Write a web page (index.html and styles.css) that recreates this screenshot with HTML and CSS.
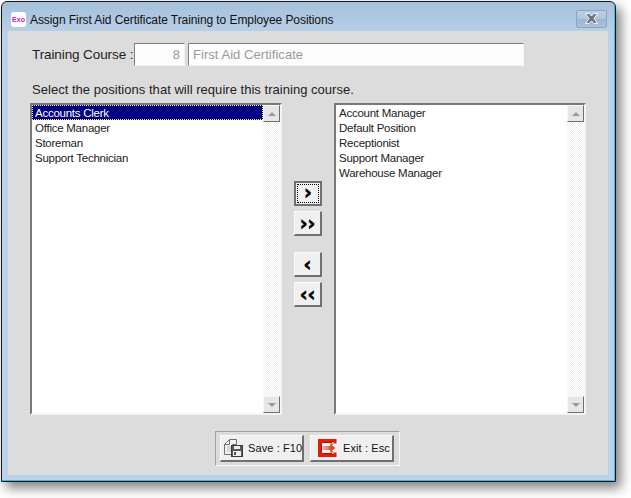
FILE: index.html
```html
<!DOCTYPE html>
<html lang="en">
<head>
    <meta charset="UTF-8">
    <meta name="viewport" content="width=device-width, initial-scale=1.0">
    <title>Assign First Aid Certificate Training to Employee Positions</title>
    <link rel="stylesheet" href="styles.css">
</head>
<body>
    <div class="window">
        <div class="titlebar">
            <span class="app-icon">Exo</span>
            <span class="title">Assign First Aid Certificate Training to Employee Positions</span>
            <button class="close-btn" aria-label="Close">
                <svg width="15" height="11" viewBox="0 0 15 11">
                    <path d="M1.500 .5h3.500l2.500 2.500L10 .5h3.500L10 5.500l3.500 5h-3.500L7.500 8 5 10.500H1.500L5 5.500z" fill="#6c7680" stroke="#f4f6f8" stroke-width="1"/>
                </svg>
            </button>
        </div>

        <div class="client">
            <div class="course-row">
                <label class="course-label">Training Course :</label>
                <div class="field field-id">8</div>
                <div class="field field-name">First Aid Certificate</div>
            </div>

            <p class="hint">Select the positions that will require this training course.</p>

            <div class="picker">
                <div class="listbox">
                    <ul class="items">
                        <li class="selected">Accounts Clerk</li>
                        <li>Office Manager</li>
                        <li>Storeman</li>
                        <li>Support Technician</li>
                    </ul>
                    <div class="scrollbar">
                        <span class="scroll-btn"><i class="tri-up"></i></span>
                        <span class="scroll-btn"><i class="tri-down"></i></span>
                    </div>
                </div>

                <div class="movers">
                    <button class="move-btn focused"><span class="focus-ring">›</span></button>
                    <button class="move-btn">››</button>
                    <button class="move-btn second-group">‹</button>
                    <button class="move-btn">‹‹</button>
                </div>

                <div class="listbox">
                    <ul class="items">
                        <li>Account Manager</li>
                        <li>Default Position</li>
                        <li>Receptionist</li>
                        <li>Support Manager</li>
                        <li>Warehouse Manager</li>
                    </ul>
                    <div class="scrollbar">
                        <span class="scroll-btn"><i class="tri-up"></i></span>
                        <span class="scroll-btn"><i class="tri-down"></i></span>
                    </div>
                </div>
            </div>

            <div class="actions">
                <button class="action-btn">
                    <svg class="btn-icon" width="19" height="18" viewBox="0 0 19 18">
                        <path d="M.5 5.500l5-5h7v5h-4v10H.5z" fill="#f4f4f4" stroke="#707070"/>
                        <path d="M5.500 .5v5h-5" fill="none" stroke="#707070"/>
                        <path d="M3 8h4M3 10h4M3 12h4" stroke="#bbb"/>
                        <rect x="7.500" y="6.500" width="11" height="11" fill="#55585c" stroke="#3a3a3a"/>
                        <rect x="10" y="7" width="6" height="3" fill="#eee"/>
                        <rect x="9" y="12" width="8" height="5" fill="#eee"/>
                        <rect x="10" y="13" width="2" height="3" fill="#55585c"/>
                    </svg>
                    <span>Save : F10</span>
                </button>
                <button class="action-btn exit-btn">
                    <svg class="btn-icon" width="19" height="18" viewBox="0 0 19 18">
                        <defs>
                            <linearGradient id="exitArrow">
                                <stop offset="0" stop-color="#f8b0a8"/>
                                <stop offset="1" stop-color="#e01800"/>
                            </linearGradient>
                        </defs>
                        <path d="M17 4.500V1.500H1.500v15H17v-3" fill="#f0f0f0" stroke="#e02000" stroke-width="3"/>
                        <path d="M14 6v-2.500H3.500v11H14V12" fill="none" stroke="#a81000" stroke-width="1"/>
                        <path d="M15.500 5.500h3.500v7h-3.500z" fill="#f0f0f0"/>
                        <path d="M5 7h7V4.500L17 9l-5 4.500V11H5z" fill="url(#exitArrow)"/>
                    </svg>
                    <span>Exit : Esc</span>
                </button>
            </div>
        </div>
    </div>
</body>
</html>
```

FILE: styles.css
```css
* {
    box-sizing: border-box;
}
body {
    margin: 0;
    padding: 1px 0 0 1px;
    width: 631px;
    height: 498px;
    overflow: hidden;
    background: #fff;
    font-family: "Liberation Sans", Arial, sans-serif;
    color: #000;
}
.window {
    width: 615px;
    height: 481px;
    border: 1px solid #14191c;
    border-radius: 6px 6px 0 0;
    padding: 0 7px 6px 6px;
    background: linear-gradient(to bottom, #a6c0da 0, #b9d1e9 32px, #bad2ea 100%);
    box-shadow: inset -1px -1px 0 #3fbcd8, 5px 6px 12px rgba(0,0,0,0.5);
}
.titlebar {
    height: 29px;
    padding: 6px 0 0 3px;
    display: flex;
    align-items: center;
}
.app-icon {
    width: 15px;
    height: 15px;
    background: #fff;
    border-radius: 3px;
    color: #c020c0;
    font-size: 7px;
    font-weight: bold;
    line-height: 15px;
    text-align: center;
    flex: none;
}
.title {
    margin-left: 4px;
    font-size: 12px;
    letter-spacing: -0.08px;
    color: #111;
}
.close-btn {
    margin-left: auto;
    margin-right: 1px;
    width: 31px;
    height: 18px;
    margin-top: -2px;
    padding: 0;
    display: flex;
    align-items: center;
    justify-content: center;
    border: 1px solid #8ea6bc;
    border-radius: 2px;
    background: linear-gradient(to bottom, #bcd0e4 0, #b0c6dc 50%, #9db6cf 51%, #a9c1d9 100%);
}

.client {
    height: 444px;
    background: #dcdcdc;
    padding-top: 12px;
}
.course-row {
    display: flex;
    align-items: center;
    height: 23px;
    padding-left: 24px;
}
.course-label {
    width: 102px;
    font-size: 13.5px;
    letter-spacing: -0.1px;
    color: #222;
    white-space: nowrap;
}
.field {
    height: 23px;
    border: 1px solid;
    border-color: #808080 #f4f4f4 #f4f4f4 #808080;
    background: #fdfdfd;
    color: #9a9a9a;
    font-size: 13px;
    letter-spacing: 0.05px;
    line-height: 22px;
}
.field-id {
    width: 51px;
    padding-right: 4px;
    text-align: right;
}
.field-name {
    width: 336px;
    margin-left: 3px;
    padding-left: 4px;
}
.hint {
    margin: 16px 0 5px 24px;
    height: 16px;
    font-size: 13px;
    line-height: 16px;
    letter-spacing: 0.03px;
    color: #222;
}

.picker {
    display: flex;
    height: 312px;
    padding-left: 22px;
}
.listbox {
    width: 252px;
    display: flex;
    border: 2px solid;
    border-color: #7a7a7a #f4f4f4 #f4f4f4 #7a7a7a;
    background: #fff;
}
.items {
    flex: 1;
    margin: 0;
    padding: 0;
    list-style: none;
    font-size: 11.5px;
    letter-spacing: -0.25px;
}
.items li {
    height: 15px;
    line-height: 17px;
    padding-left: 3px;
    color: #222;
}
.items li.selected {
    background: #000080;
    color: #fff;
    outline: 1px dotted #ffe9a0;
    outline-offset: -1px;
}
.scrollbar {
    width: 17px;
    display: flex;
    flex-direction: column;
    justify-content: space-between;
    background: repeating-conic-gradient(#f0f0f0 0 25%, #fff 0 50%) 0 0 / 2px 2px;
}
.scroll-btn {
    height: 17px;
    display: flex;
    align-items: center;
    justify-content: center;
    background: #e6e6e6;
    border: 1px solid;
    border-color: #f6f6f6 #707070 #707070 #f6f6f6;
}
.tri-up, .tri-down {
    width: 0;
    height: 0;
    border-left: 4px solid transparent;
    border-right: 4px solid transparent;
}
.tri-up {
    border-bottom: 4px solid #9a9a9a;
}
.tri-down {
    border-top: 4px solid #9a9a9a;
}

.movers {
    width: 52px;
    padding: 78px 0 0 12px;
    display: flex;
    flex-direction: column;
    gap: 5px;
}
.move-btn {
    width: 28px;
    height: 25px;
    padding: 0;
    border: 1px solid;
    border-color: #fafafa #707070 #707070 #fafafa;
    border-width: 1px 2px 2px 1px;
    background: #f0f0f0;
    font-family: "DejaVu Sans", sans-serif;
    font-size: 19px;
    font-weight: bold;
    -webkit-text-stroke: 0.6px #000;
    line-height: 18px;
    letter-spacing: 0;
    color: #000;
}
.move-btn.focused {
    border: 2px solid;
    border-color: #707070;
    padding: 1px;
}
.focus-ring {
    display: block;
    height: 100%;
    line-height: 15px;
    border: 1px dotted #000;
}
.second-group {
    margin-top: 11px;
}

.actions {
    width: 185px;
    height: 35px;
    margin: 16px 0 0 207px;
    padding: 3px 4px;
    display: flex;
    gap: 6px;
    border: 1px solid;
    border-color: #a0a0a0 #f6f6f6 #f6f6f6 #a0a0a0;
}
.action-btn {
    width: 84px;
    height: 27px;
    padding: 0 0 0 3px;
    display: flex;
    align-items: center;
    gap: 5px;
    border: 1px solid;
    border-color: #fafafa #707070 #707070 #fafafa;
    border-width: 1px 2px 2px 1px;
    background: #f0f0f0;
    font-family: "Liberation Sans", Arial, sans-serif;
    font-size: 11px;
    letter-spacing: 0.1px;
    color: #111;
    white-space: nowrap;
}
.exit-btn {
    padding-left: 7px;
    gap: 6px;
}
.btn-icon {
    flex: none;
}
```
